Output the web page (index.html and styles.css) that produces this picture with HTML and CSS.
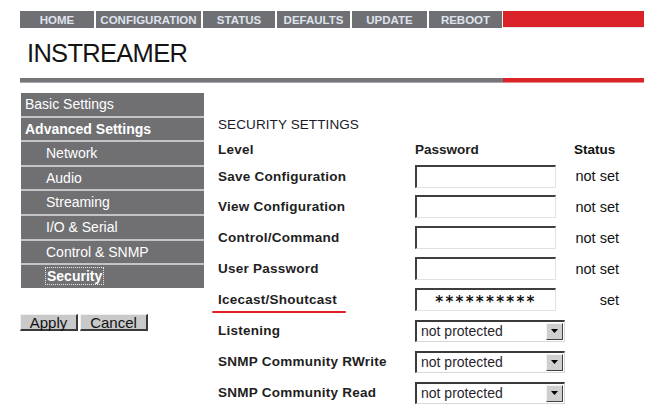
FILE: index.html
```html
<!DOCTYPE html>
<html>
<head>
<meta charset="utf-8">
<link rel="stylesheet" href="styles.css">
</head>
<body>
<div class="page">
  <nav class="nav">
    <a class="nav-item w-home">HOME</a>
    <a class="nav-item w-config">CONFIGURATION</a>
    <a class="nav-item w-status">STATUS</a>
    <a class="nav-item w-defaults">DEFAULTS</a>
    <a class="nav-item w-update">UPDATE</a>
    <a class="nav-item w-reboot">REBOOT</a>
    <span class="nav-red"></span>
  </nav>
  <h1 class="title">INSTREAMER</h1>
  <div class="rule"><span class="rule-gray"></span><span class="rule-red"></span></div>

  <div class="main">
    <div class="side">
      <ul class="menu">
        <li class="menu-item">Basic Settings</li>
        <li class="menu-item bold">Advanced Settings</li>
        <li class="menu-item sub">Network</li>
        <li class="menu-item sub">Audio</li>
        <li class="menu-item sub">Streaming</li>
        <li class="menu-item sub">I/O &amp; Serial</li>
        <li class="menu-item sub">Control &amp; SNMP</li>
        <li class="menu-item sub bold"><span class="focus">Security</span></li>
      </ul>
      <div class="buttons">
        <button class="btn">Apply</button>
        <button class="btn">Cancel</button>
      </div>
    </div>

    <div class="form">
      <div class="heading">SECURITY SETTINGS</div>
      <div class="row head">
        <span class="lbl">Level</span>
        <span class="pw">Password</span>
        <span class="st st-head">Status</span>
      </div>
      <div class="row first">
        <span class="lbl">Save Configuration</span>
        <span class="pw"><input class="field" type="text"></span>
        <span class="st">not set</span>
      </div>
      <div class="row">
        <span class="lbl">View Configuration</span>
        <span class="pw"><input class="field" type="text"></span>
        <span class="st">not set</span>
      </div>
      <div class="row">
        <span class="lbl">Control/Command</span>
        <span class="pw"><input class="field" type="text"></span>
        <span class="st">not set</span>
      </div>
      <div class="row">
        <span class="lbl">User Password</span>
        <span class="pw"><input class="field" type="text"></span>
        <span class="st">not set</span>
      </div>
      <div class="row">
        <span class="lbl"><span class="marked">Icecast/Shoutcast</span></span>
        <span class="pw"><input class="field stars" type="text" value="**********"></span>
        <span class="st">set</span>
      </div>
      <div class="row">
        <span class="lbl">Listening</span>
        <span class="pw"><span class="sel"><span class="sel-text">not protected</span><span class="sel-btn"><svg width="7" height="4" viewBox="0 0 7 4"><path d="M0 0H7L3.5 4Z" fill="#000"/></svg></span></span></span>
        <span class="st"></span>
      </div>
      <div class="row">
        <span class="lbl">SNMP Community RWrite</span>
        <span class="pw"><span class="sel"><span class="sel-text">not protected</span><span class="sel-btn"><svg width="7" height="4" viewBox="0 0 7 4"><path d="M0 0H7L3.5 4Z" fill="#000"/></svg></span></span></span>
        <span class="st"></span>
      </div>
      <div class="row">
        <span class="lbl">SNMP Community Read</span>
        <span class="pw"><span class="sel"><span class="sel-text">not protected</span><span class="sel-btn"><svg width="7" height="4" viewBox="0 0 7 4"><path d="M0 0H7L3.5 4Z" fill="#000"/></svg></span></span></span>
        <span class="st"></span>
      </div>
    </div>
  </div>
</div>
</body>
</html>
```

FILE: styles.css
```css
* { box-sizing: border-box; }
html, body { margin: 0; padding: 0; background: #fff; }
body { font-family: "Liberation Sans", Arial, sans-serif; color: #1c1c1c; }

.page { padding: 11px 0 0 20px; width: 658px; }

/* top nav */
.nav { display: flex; height: 17px; width: 624px; }
.nav-item {
  display: flex; align-items: center; justify-content: center;
  background: #6f7073; color: #dfe3ee;
  font-size: 11.5px; font-weight: bold; margin-right: 2px;
}
.w-home { width: 74px; }
.w-config { width: 105px; }
.w-status { width: 72px; }
.w-defaults { width: 73px; }
.w-update { width: 75px; }
.w-reboot { width: 73px; margin-right: 1px; }
.nav-red { flex: 1; background: #da2229; border-bottom: 1px solid #e6e6e6; }

.title {
  margin: 10px 0 0 7px; height: 30px; line-height: 30px;
  font-size: 25.5px; font-weight: normal; color: #141414; letter-spacing: -0.7px;
}

.rule { display: flex; width: 624px; height: 5px; margin-top: 10px; }
.rule-gray { width: 483px; background: #75767a; border-bottom: 1px solid #a9aaad; }
.rule-red { flex: 1; background: #da2229; border-bottom: 1px solid #e68a8d; }

.main { display: flex; margin-top: 10px; }

/* sidebar */
.side { width: 198px; }
.menu { list-style: none; margin: 0 0 0 1px; padding: 0; width: 183px; background: #707073; }
.menu-item {
  height: 24.6px; line-height: 23px; font-size: 14px; color: #fff;
  padding-left: 4px; border-bottom: 2px solid #c4c4c6;
}
.menu-item:last-child { border-bottom: none; height: 23px; }
.menu-item.bold { font-weight: bold; }
.menu-item.sub { padding-left: 25px; }
.focus { outline: 1px dotted #e8e8e8; outline-offset: 0; padding: 0 1px; }

.buttons { display: flex; gap: 2px; margin-top: 26px; }
.btn {
  height: 17px; padding: 0; margin: 0;
  font-family: "Liberation Sans", Arial, sans-serif; font-size: 15px; line-height: 13px;
  color: #111; background: #c9c9ca;
  border-style: solid; border-width: 1px 2px 2px 1px;
  border-color: #f0f0f0 #3a3a3a #3a3a3a #f0f0f0;
}
.btn:first-child { width: 58px; }
.btn:last-child { width: 68px; }

/* form */
.form { padding-top: 20px; width: 430px; }
.heading { height: 24px; line-height: 24px; font-size: 13.5px; color: #1a1a2a; letter-spacing: 0.1px; }
.row { display: flex; align-items: center; height: 31px; }
.row.head { height: 24px; }
.row.first { height: 30px; }
.lbl { width: 197px; font-size: 13.5px; font-weight: bold; color: #1e1e1e; letter-spacing: 0.25px; }
.pw { width: 159px; font-size: 13.5px; font-weight: bold; display: flex; align-items: center; }
.st { width: 45px; text-align: right; font-size: 14.5px; color: #111; }
.st-head { text-align: left; font-weight: bold; font-size: 13.5px; }

.field {
  width: 141px; height: 23px; margin: 0; padding: 0;
  border-style: solid; border-width: 2px 1px 1px 2px;
  border-color: #3f3f3f #e2e2e2 #e2e2e2 #3f3f3f;
  background: #fff; font-family: "Liberation Sans", Arial, sans-serif;
}
.stars {
  text-align: center; font-family: "DejaVu Sans", sans-serif; font-weight: bold;
  font-size: 15px; color: #111; letter-spacing: 2.3px; padding-top: 3px;
}

.marked { position: relative; }
.marked::after {
  content: ""; position: absolute; left: -6px; right: -9px; bottom: -6px;
  height: 2px; background: #e3202a; border-radius: 1px;
}

.sel {
  display: flex; align-items: center; justify-content: space-between;
  width: 150px; height: 22px;
  border-style: solid; border-width: 2px 1px 1px 2px;
  border-color: #3a3a3a #d8d8d8 #d8d8d8 #3a3a3a;
  background: #fff; padding-left: 4px;
}
.sel-text { font-weight: normal; font-size: 14px; color: #2a1f2e; letter-spacing: 0; }
.sel-btn {
  display: flex; align-items: center; justify-content: center;
  width: 17px; height: 17px; margin-right: 1px;
  background: #cfcfcf;
  border-style: solid; border-width: 1px;
  border-color: #f2f2f2 #404040 #404040 #f2f2f2;
}
```
